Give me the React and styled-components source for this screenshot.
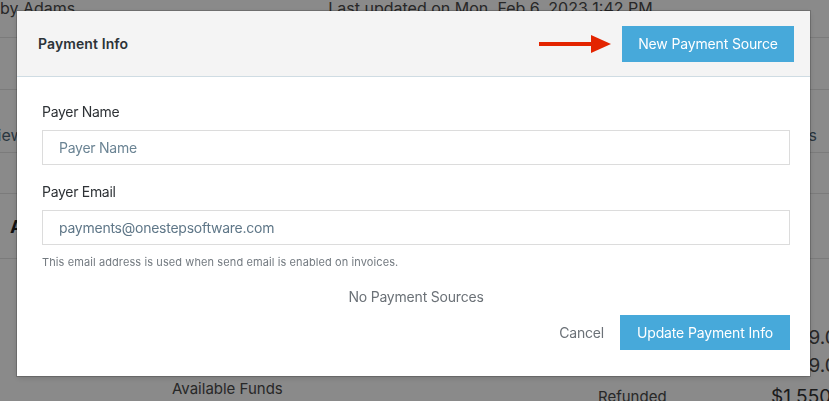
import React from 'react'
import styled, { createGlobalStyle } from 'styled-components'

const Global = createGlobalStyle`
  html, body {
    margin: 0;
    padding: 0;
    background: #ffffff;
    font-family: Inter, "Noto Sans", "Liberation Sans", sans-serif;
    overflow: hidden;
  }
  * { box-sizing: border-box; }
`

/* page behind the dialog */
const Page = styled.div`
  width: 829px;
  height: 401px;
  color: #4a4a4a;
  overflow: hidden;
`

const PageRow = styled.div`
  height: ${p => p.h}px;
  border-bottom: ${p => (p.line ? '1px solid #e4e4e4' : 'none')};
  display: flex;
  align-items: ${p => p.align || 'center'};
  justify-content: space-between;
  padding: 0 ${p => p.pr || 0}px ${p => p.pb || 0}px ${p => p.pl || 0}px;
  font-size: 16px;
`

const Meta = styled.span`
  margin-top: -22px;
  margin-left: ${p => p.ml || 0}px;
  flex: ${p => (p.grow ? 1 : 'none')};
  white-space: nowrap;
`

const Tab = styled.span`
  color: #4d6475;
  font-size: 16px;
  margin: 0 ${p => p.mr || 0}px 0 ${p => p.ml || 0}px;
  white-space: nowrap;
`

const Heading = styled.span`
  font-weight: 700;
  font-size: 18px;
  color: #222;
`

const Funds = styled.div`
  display: grid;
  grid-template-columns: 172px 426px 173px 1fr;
  grid-template-rows: 28px 28px 34px;
  align-items: center;
  padding-top: 64px;
  font-size: 15px;
`

const Amount = styled.span`
  grid-column: ${p => p.col};
  grid-row: ${p => p.row};
  font-size: ${p => p.size || 15}px;
  color: ${p => p.color || '#4a4a4a'};
  white-space: nowrap;
  align-self: ${p => p.self || 'center'};
  margin-left: ${p => p.indent || 0}px;
`

/* overlay + dialog */
const Overlay = styled.div`
  position: fixed;
  inset: 0;
  background: rgba(0, 0, 0, 0.46);
  padding: 11px 0 0 17px;
  display: flex;
  align-items: flex-start;
`

const Modal = styled.div`
  width: 793px;
  background: #fff;
  box-shadow: 0 0 0 1px rgba(0, 0, 0, 0.18), 0 2px 6px rgba(0, 0, 0, 0.15);
`

const Header = styled.div`
  height: 66px;
  background: #f4f4f4;
  border-bottom: 1px solid #cfdce3;
  display: flex;
  align-items: center;
  justify-content: space-between;
  padding: 0 16px 0 21px;
`

const Title = styled.h3`
  margin: 0;
  font-size: 14px;
  font-weight: 600;
  color: #2c3338;
  letter-spacing: 0.1px;
`

const HeaderActions = styled.div`
  display: flex;
  align-items: center;
  gap: 11px;
`

const PrimaryButton = styled.button`
  height: ${p => p.h || 36}px;
  width: ${p => p.w}px;
  border: none;
  border-radius: 0;
  background: #47a9da;
  color: #ffffff;
  font-family: inherit;
  font-size: 14px;
  letter-spacing: -0.15px;
  cursor: pointer;
`

const Body = styled.div`
  padding: 25px 20px 26px 25px;
  display: flex;
  flex-direction: column;
`

const Label = styled.label`
  font-size: 14px;
  line-height: 20px;
  letter-spacing: -0.3px;
  color: #2e3236;
  margin-top: ${p => p.mt || 0}px;
`

const Input = styled.input`
  margin-top: 8px;
  height: 35px;
  width: 100%;
  border: 1px solid #dcdcdc;
  border-radius: 0;
  padding: 0 16px;
  font-family: inherit;
  font-size: 14px;
  letter-spacing: -0.25px;
  color: #5f7788;
  outline: none;
  &::placeholder {
    color: #6b8494;
  }
`

const Help = styled.p`
  margin: 9px 0 0;
  font-size: 11px;
  line-height: 16px;
  color: #737a80;
  letter-spacing: 0.1px;
`

const Empty = styled.p`
  margin: 17px 0 0;
  text-align: center;
  font-size: 14px;
  line-height: 20px;
  letter-spacing: -0.2px;
  color: #6b7177;
`

const Footer = styled.div`
  display: flex;
  justify-content: flex-end;
  align-items: center;
  gap: 16px;
  margin-top: 8px;
`

const TextButton = styled.button`
  background: none;
  border: none;
  padding: 0;
  font-family: inherit;
  font-size: 14px;
  letter-spacing: -0.2px;
  color: #6b7177;
  cursor: pointer;
`

const Arrow = () => (
  <svg width="72" height="20" viewBox="0 0 72 20">
    <rect x="0" y="8" width="54" height="4" fill="#e32400" />
    <polygon points="52,1 72,10 52,19" fill="#e32400" />
  </svg>
)

export default function App() {
  return (
    <>
      <Global />
      <Page>
        <PageRow h={38} line>
          <Meta>by Adams</Meta>
          <Meta grow ml={253}>Last updated on Mon, Feb 6, 2023 1:42 PM</Meta>
        </PageRow>
        <PageRow h={52} line />
        <PageRow h={63} line align="flex-end" pb={7}>
          <Tab ml={-48}>Overview</Tab>
          <Tab mr={12}>Payments</Tab>
        </PageRow>
        <PageRow h={41} line />
        <PageRow h={65} line pl={10}>
          <Heading>Account</Heading>
        </PageRow>
        <Funds>
          <Amount col={4} row={1} size={19} indent={-11}>$1,539.00</Amount>
          <Amount col={4} row={2} size={19} indent={-11}>$1,539.00</Amount>
          <Amount col={2} row={3} self="start">Available Funds</Amount>
          <Amount col={3} row={3}>Refunded</Amount>
          <Amount col={4} row={3} size={19} color="#333">$1,550.00</Amount>
        </Funds>
      </Page>

      <Overlay>
        <Modal>
          <Header>
            <Title>Payment Info</Title>
            <HeaderActions>
              <Arrow />
              <PrimaryButton w={172}>New Payment Source</PrimaryButton>
            </HeaderActions>
          </Header>
          <Body>
            <Label>Payer Name</Label>
            <Input placeholder="Payer Name" />
            <Label mt={17}>Payer Email</Label>
            <Input defaultValue="payments@onestepsoftware.com" />
            <Help>This email address is used when send email is enabled on invoices.</Help>
            <Empty>No Payment Sources</Empty>
            <Footer>
              <TextButton>Cancel</TextButton>
              <PrimaryButton w={170} h={35}>Update Payment Info</PrimaryButton>
            </Footer>
          </Body>
        </Modal>
      </Overlay>
    </>
  )
}
